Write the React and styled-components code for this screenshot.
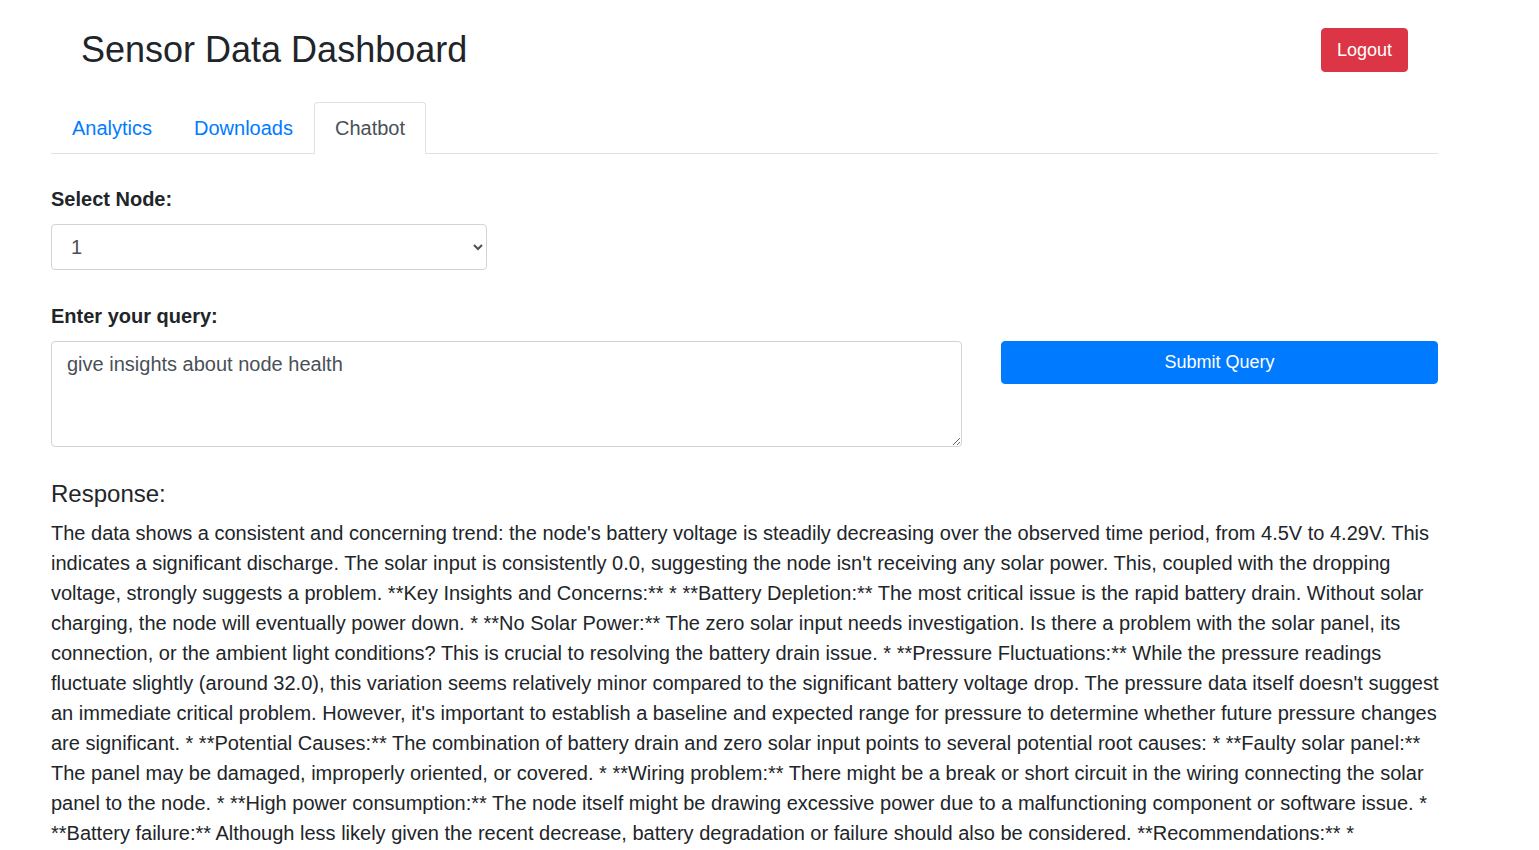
import React, { useState } from 'react';
import styled, { createGlobalStyle } from 'styled-components';

const RESPONSE_TEXT =
  "The data shows a consistent and concerning trend: the node's battery voltage is steadily decreasing over the observed time period, from 4.5V to 4.29V. This indicates a significant discharge. The solar input is consistently 0.0, suggesting the node isn't receiving any solar power. This, coupled with the dropping voltage, strongly suggests a problem. **Key Insights and Concerns:** * **Battery Depletion:** The most critical issue is the rapid battery drain. Without solar charging, the node will eventually power down. * **No Solar Power:** The zero solar input needs investigation. Is there a problem with the solar panel, its connection, or the ambient light conditions? This is crucial to resolving the battery drain issue. * **Pressure Fluctuations:** While the pressure readings fluctuate slightly (around 32.0), this variation seems relatively minor compared to the significant battery voltage drop. The pressure data itself doesn't suggest an immediate critical problem. However, it's important to establish a baseline and expected range for pressure to determine whether future pressure changes are significant. * **Potential Causes:** The combination of battery drain and zero solar input points to several potential root causes: * **Faulty solar panel:** The panel may be damaged, improperly oriented, or covered. * **Wiring problem:** There might be a break or short circuit in the wiring connecting the solar panel to the node. * **High power consumption:** The node itself might be drawing excessive power due to a malfunctioning component or software issue. * **Battery failure:** Although less likely given the recent decrease, battery degradation or failure should also be considered. **Recommendations:** *";

const TABS = ['Analytics', 'Downloads', 'Chatbot'];

const App = () => {
  const [activeTab, setActiveTab] = useState('Chatbot');
  const [node, setNode] = useState('1');
  const [query, setQuery] = useState('give insights about node health');

  return (
    <>
      <GlobalStyle />
      <Page>
        <Header>
          <Title>Sensor Data Dashboard</Title>
          <LogoutButton>Logout</LogoutButton>
        </Header>

        <Tabs>
          {TABS.map(tab => (
            <TabLink
              key={tab}
              $active={tab === activeTab}
              onClick={() => setActiveTab(tab)}
            >
              {tab}
            </TabLink>
          ))}
        </Tabs>

        <FieldLabel $top={30}>Select Node:</FieldLabel>
        <NodeSelect value={node} onChange={e => setNode(e.target.value)}>
          <option value="1">1</option>
          <option value="2">2</option>
          <option value="3">3</option>
        </NodeSelect>

        <FieldLabel $top={31}>Enter your query:</FieldLabel>
        <QueryRow>
          <QueryInput value={query} onChange={e => setQuery(e.target.value)} />
          <SubmitButton>Submit Query</SubmitButton>
        </QueryRow>

        <ResponseTitle>Response:</ResponseTitle>
        <ResponseText>{RESPONSE_TEXT}</ResponseText>
      </Page>
    </>
  );
};

const GlobalStyle = createGlobalStyle`
  body {
    margin: 0;
    background: #fff;
    color: #212529;
    font-family: "Liberation Sans", Arial, sans-serif;
  }
  * {
    box-sizing: border-box;
  }
`;

const Page = styled.div`
  width: 1387px;
  margin-left: 51px;
  padding-top: 24px;
`;

const Header = styled.div`
  display: flex;
  justify-content: space-between;
  align-items: center;
  padding: 0 30px;
  height: 52px;
`;

const Title = styled.h1`
  margin: 0;
  font-size: 36px;
  font-weight: 500;
  line-height: 1.2;
`;

const LogoutButton = styled.button`
  font-family: inherit;
  font-size: 18px;
  line-height: 26px;
  padding: 8px 15px;
  color: #fff;
  background-color: #dc3545;
  border: 1px solid #dc3545;
  border-radius: 4px;
  cursor: pointer;
`;

const Tabs = styled.div`
  display: flex;
  margin-top: 26px;
  border-bottom: 1px solid #dee2e6;
`;

const TabLink = styled.a`
  display: block;
  font-size: 20px;
  line-height: 30px;
  padding: 10px 20px;
  margin-bottom: -1px;
  border: 1px solid transparent;
  border-radius: 4px 4px 0 0;
  cursor: pointer;
  color: ${p => (p.$active ? '#495057' : '#007bff')};
  background: ${p => (p.$active ? '#fff' : 'transparent')};
  border-color: ${p => (p.$active ? '#dee2e6 #dee2e6 #fff' : 'transparent')};
`;

const FieldLabel = styled.label`
  display: block;
  margin-top: ${p => p.$top}px;
  margin-bottom: 10px;
  font-size: 20px;
  line-height: 30px;
  font-weight: 700;
`;

const NodeSelect = styled.select`
  display: block;
  width: 436px;
  height: 46px;
  padding: 7px 15px;
  font-family: inherit;
  font-size: 20px;
  color: #495057;
  background: #fff;
  border: 1px solid #ced4da;
  border-radius: 4px;
`;

const QueryRow = styled.div`
  display: grid;
  grid-template-columns: 1fr 437px;
  gap: 39px;
  align-items: start;
`;

const QueryInput = styled.textarea`
  display: block;
  height: 106px;
  padding: 7px 15px;
  font-family: inherit;
  font-size: 20px;
  line-height: 30px;
  color: #495057;
  border: 1px solid #ced4da;
  border-radius: 4px;
  resize: vertical;
`;

const SubmitButton = styled.button`
  height: 43px;
  font-family: inherit;
  font-size: 18px;
  line-height: 25px;
  padding: 8px 16px;
  color: #fff;
  background-color: #007bff;
  border: 1px solid #007bff;
  border-radius: 4px;
  cursor: pointer;
`;

const ResponseTitle = styled.h4`
  margin: 33px 0 9px;
  font-size: 24px;
  font-weight: 500;
  line-height: 1.2;
`;

const ResponseText = styled.p`
  width: 1390px;
  margin: 0;
  font-size: 20px;
  line-height: 30px;
`;

export default App;
